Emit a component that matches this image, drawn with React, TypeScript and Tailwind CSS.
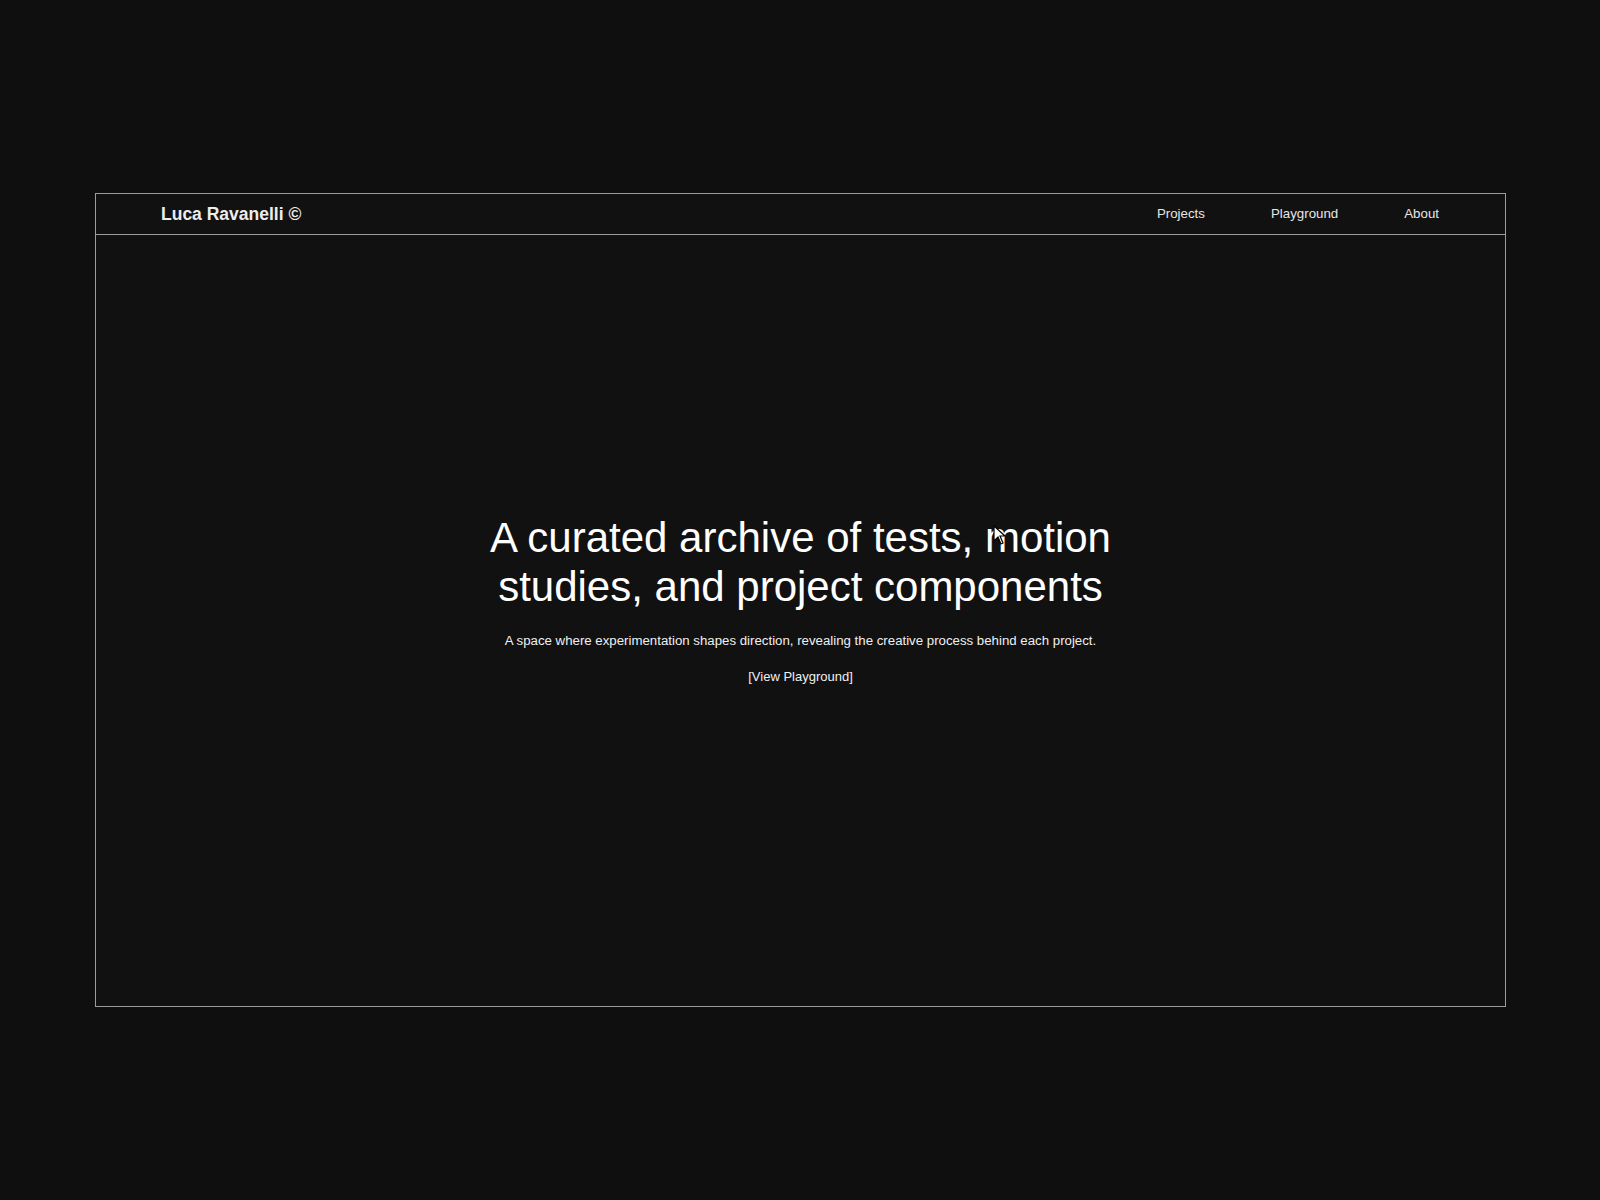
import React from "react";

const navLinks = ["Projects", "Playground", "About"];

const App = () => {
  return (
    <main
      className="relative min-h-[1200px] w-full bg-[#0f0f0f] pt-[193px] pl-[95px] pr-[94px]"
      style={{ fontFamily: '"Liberation Sans", Arial, Helvetica, sans-serif' }}
    >
      <section className="flex h-[814px] w-full flex-col border border-[#9c9c9c] bg-[#111111]">
        <header className="flex h-[41px] shrink-0 items-center justify-between border-b border-[#9c9c9c] pl-[65px] pr-[33px]">
          <span className="text-[17.5px] font-bold text-[#ececec]">Luca Ravanelli ©</span>
          <nav className="flex items-center">
            {navLinks.map((link) => (
              <a key={link} href="#" className="px-[33px] text-[13.3px] text-[#e6e6e6]">
                {link}
              </a>
            ))}
          </nav>
        </header>

        <div className="flex flex-1 flex-col items-center pt-[278px]">
          <h1 className="relative text-center text-[42px] font-normal leading-[49px] text-white">
            A curated archive of tests, motion
            <br />
            studies, and project components
            {/* mouse pointer */}
            <svg
              className="absolute left-[503px] top-[12px]"
              width="14"
              height="20"
              viewBox="0 0 14 20"
            >
              <path d="M1 1 L1 16 L5 12 L8 19 L10 18 L7 11 L12 11 Z" fill="white" stroke="black" strokeWidth="1.2" />
            </svg>
          </h1>
          <p className="mt-[20px] text-[13.25px] text-[#f0f0f0]">
            A space where experimentation shapes direction, revealing the creative process behind each project.
          </p>
          <a href="#" className="mt-[16px] text-[13px] text-[#f0f0f0]">
            [View Playground]
          </a>
        </div>
      </section>
    </main>
  );
};

export default App;
